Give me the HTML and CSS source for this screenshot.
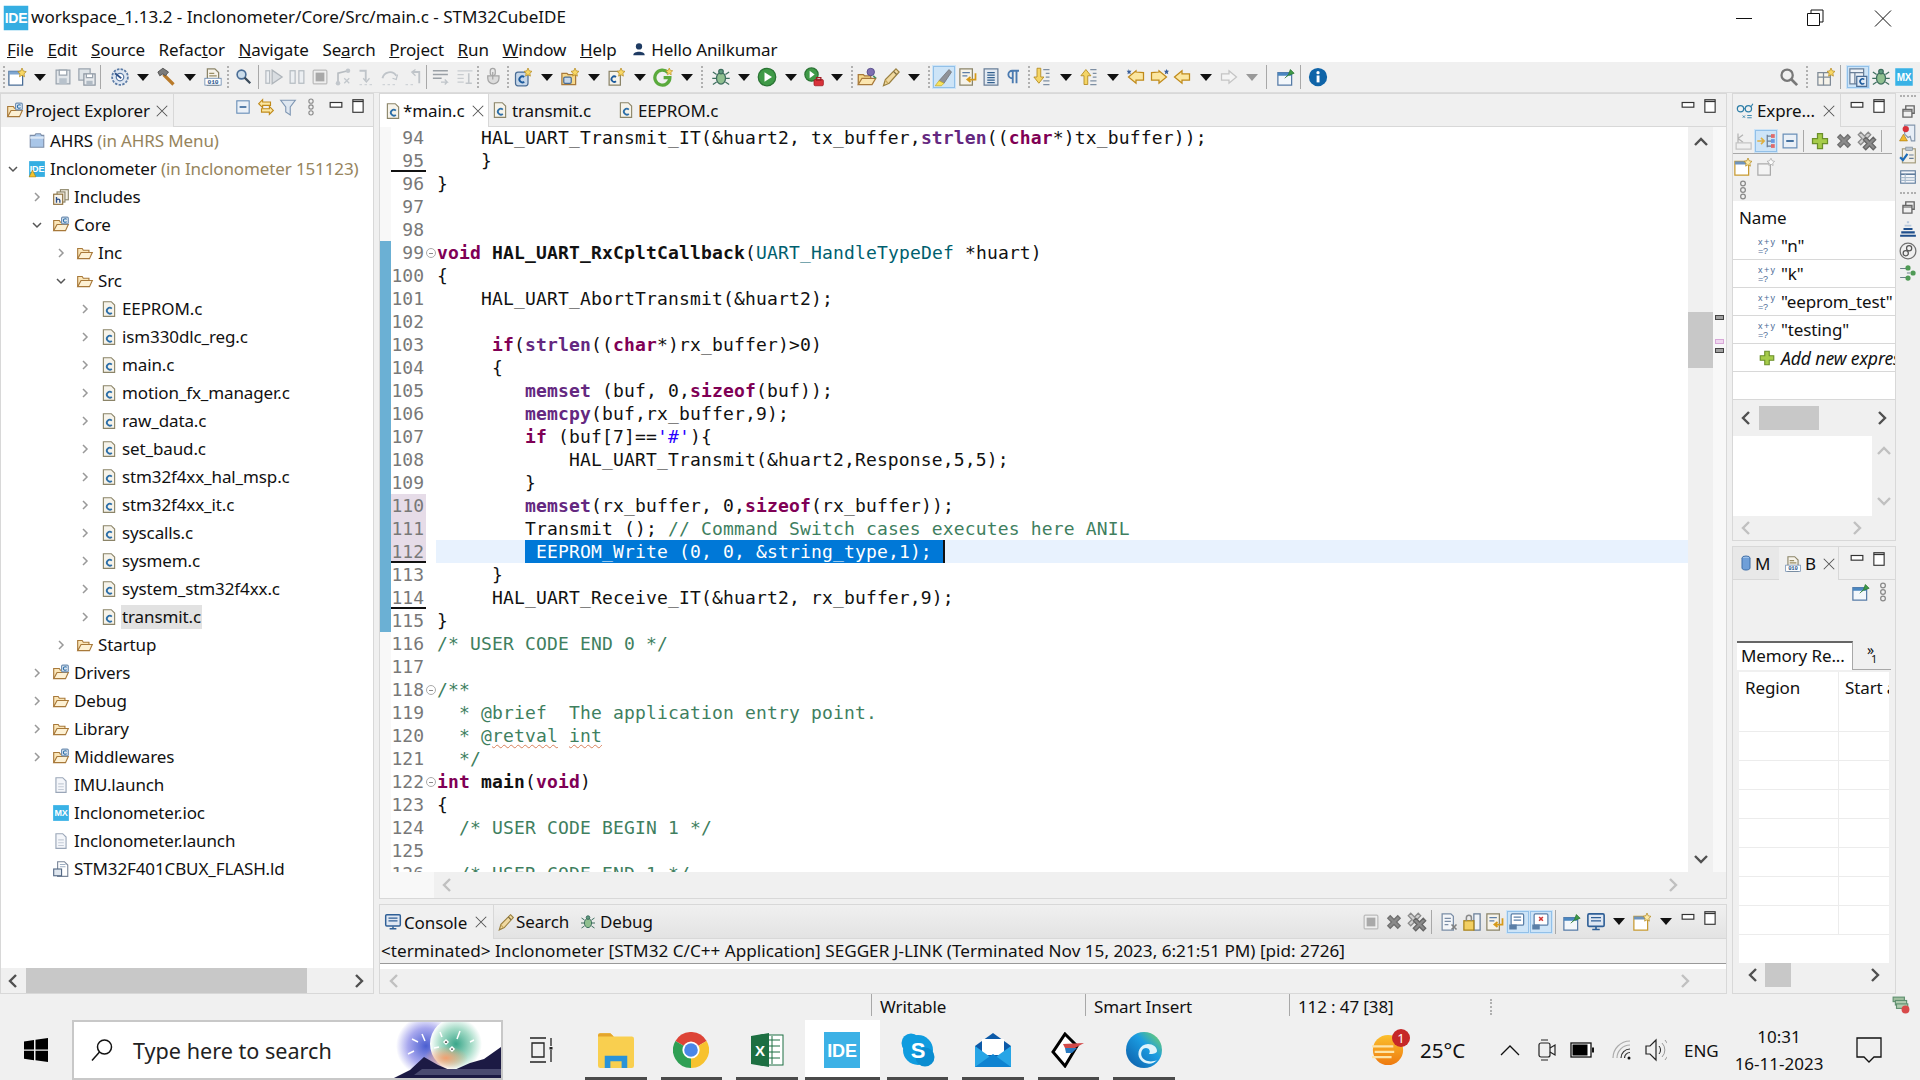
FILE: index.html
```html
<!DOCTYPE html>
<html lang="en">
<head>
    <meta charset="UTF-8">
    <meta name="viewport" content="width=device-width, initial-scale=1.0">
    <title>workspace_1.13.2 - Inclonometer/Core/Src/main.c - STM32CubeIDE</title>
    <link rel="stylesheet" href="styles.css">
</head>
<body>
    <!-- icon sheet -->
    <svg class="sheet" xmlns="http://www.w3.org/2000/svg">
        <symbol id="cfile" viewBox="0 0 16 16"><path d="M3 1.500h7l3 3v10H3z" fill="#f6f3ea" stroke="#8b8468"/><path d="M10.500 7.600a2.600 2.600 0 1 0 0 3.800" fill="none" stroke="#2d6fa8" stroke-width="1.600"/></symbol>
        <symbol id="folder" viewBox="0 0 16 16"><path d="M1.500 13V4h4l1 1.500h5V8" fill="#fbe6b8" stroke="#a8793a"/><path d="M1.500 13l3-5.500h10L12 13z" fill="#fdf1d4" stroke="#a8793a"/></symbol>
        <symbol id="foldc" viewBox="0 0 16 16"><path d="M1.500 13V4h5l1 1.500h4V8" fill="#fbe6b8" stroke="#a8793a"/><path d="M1.500 13l3-5.500h10L12 13z" fill="#fdf1d4" stroke="#a8793a"/><rect x="8.500" y="1" width="6" height="6" rx="1" fill="#dbe6f2" stroke="#6f8fb3"/><path d="M13 3a1.600 1.600 0 1 0 0 2" fill="none" stroke="#2d6fa8"/></symbol>
        <symbol id="incl" viewBox="0 0 16 16"><rect x="7.500" y="1.500" width="7" height="9" fill="#f3efe3" stroke="#8b8468"/><rect x="4.500" y="3.500" width="7" height="9" fill="#f3efe3" stroke="#8b8468"/><rect x="1.500" y="5.500" width="8" height="9" fill="#f8f5ec" stroke="#8b6d3a"/><path d="M4 8v5M4 11c0-1.400 3-1.400 3 0v2" fill="none" stroke="#2d4f88" stroke-width="1.200"/></symbol>
        <symbol id="closedp" viewBox="0 0 16 16"><path d="M2 3h4l1-1.500h4L12 3h2v10.500H2z" fill="#a9c6e8" stroke="#7d8ea8"/><rect x="2" y="4" width="12" height="2" fill="#dbe7f5"/></symbol>
        <symbol id="idep" viewBox="0 0 16 16"><rect x="1" y="1" width="14" height="14" fill="#35aee2"/><text x="8" y="11" font-family="Liberation Sans" font-size="8" font-weight="700" fill="#fff" text-anchor="middle">IDE</text><path d="M1 15l3-6 3 6z" fill="#f4c430" stroke="#a07a10" stroke-width=".5"/></symbol>
        <symbol id="ide" viewBox="0 0 16 16"><rect x="1" y="1" width="14" height="14" fill="#35aee2"/><text x="8" y="11" font-family="Liberation Sans" font-size="8" font-weight="700" fill="#fff" text-anchor="middle">IDE</text></symbol>
        <symbol id="mx" viewBox="0 0 16 16"><rect x="1" y="1" width="14" height="14" fill="#39b2e6"/><text x="8" y="11" font-family="Liberation Sans" font-size="8" font-weight="700" fill="#fff" text-anchor="middle">MX</text></symbol>
        <symbol id="doc" viewBox="0 0 16 16"><path d="M3.500 1.500h6l3 3v10h-9z" fill="#f4f6fa" stroke="#9aa6b8"/><path d="M5.500 7h5M5.500 9.500h5M5.500 12h5" stroke="#c4cbd6"/></symbol>
        <symbol id="ld" viewBox="0 0 16 16"><path d="M5 1.500h6l3 3v10H5z" fill="#fff" stroke="#7a8699"/><rect x="1.500" y="8" width="7" height="6" fill="#dfe6ee" stroke="#566a86"/><path d="M7 4h5M7 6h5" stroke="#9fb0c4"/></symbol>
        <symbol id="newwin" viewBox="0 0 16 16"><rect x="1.500" y="3.500" width="11" height="11" fill="#fff" stroke="#4a6d96"/><rect x="1.500" y="3.500" width="11" height="2.500" fill="#7fa6d0"/><path d="M12 .8l1 2.400 2.400.5-1.800 1.700.4 2.400-2-1.200-2 1.200.4-2.400L8.600 3.700l2.400-.5z" fill="#f7d766" stroke="#b58b20" stroke-width=".6"/></symbol>
        <symbol id="save" viewBox="0 0 16 16"><path d="M2.500 2.500h11v11h-11z" fill="#e2e6ea" stroke="#9aa4ae"/><rect x="5" y="2.500" width="6" height="4" fill="#fff" stroke="#9aa4ae"/><rect x="5" y="9" width="6" height="4.500" fill="#b8c2cc"/></symbol>
        <symbol id="saveall" viewBox="0 0 16 16"><path d="M1.500 1.500h9v9h-9z" fill="#dfe4e8" stroke="#9aa4ae"/><path d="M5.500 5.500h9v9h-9z" fill="#e8ebee" stroke="#8e98a2"/><rect x="7.500" y="5.500" width="5" height="3" fill="#fff" stroke="#9aa4ae"/><rect x="7.500" y="11" width="5" height="3.500" fill="#b0bac4"/></symbol>
        <symbol id="gear" viewBox="0 0 16 16"><circle cx="8" cy="8" r="6.300" fill="#dfe7f2" stroke="#5b7ba6" stroke-width="1.400" stroke-dasharray="2 1"/><circle cx="8" cy="8" r="3" fill="#fff" stroke="#5b7ba6"/><path d="M4 5l5 4" stroke="#2d4f88" stroke-width="1.400"/></symbol>
        <symbol id="hammer" viewBox="0 0 16 16"><path d="M6 6l8 8" stroke="#b97a2a" stroke-width="2.600"/><path d="M1.500 4l4-3 4.500 3-2.500 3-2-1.500-2.500 1.500z" fill="#7b7b7b" stroke="#4c4c4c" stroke-width=".7"/></symbol>
        <symbol id="bin" viewBox="0 0 16 16"><path d="M3.500 1.500h6l3 3v10h-9z" fill="#f6f3ea" stroke="#8b8468"/><path d="M5 5h4M5 7h6" stroke="#9a8f66"/><rect x="1.500" y="9" width="13" height="5.500" fill="#fff" stroke="#5d7fa8" stroke-width=".6"/><text x="8" y="13.500" font-family="Liberation Mono" font-size="5" font-weight="700" fill="#27568c" text-anchor="middle">010</text></symbol>
        <symbol id="tag" viewBox="0 0 16 16"><circle cx="6" cy="6" r="3.500" fill="#cbdcea" stroke="#4a6d96" stroke-width="1.300"/><path d="M8.500 8.500l4.500 4.500" stroke="#3a4a5a" stroke-width="1.800"/></symbol>
        <symbol id="resume" viewBox="0 0 16 16"><rect x="1.500" y="3" width="3" height="10" fill="#eceff2" stroke="#b6bcc2"/><path d="M6.500 2.500l8 5.500-8 5.500z" fill="#d9dde1" stroke="#aeb4ba"/></symbol>
        <symbol id="suspend" viewBox="0 0 16 16"><rect x="2.500" y="3" width="4" height="10" fill="#eceff2" stroke="#b6bcc2"/><rect x="9.500" y="3" width="4" height="10" fill="#eceff2" stroke="#b6bcc2"/></symbol>
        <symbol id="stop" viewBox="0 0 16 16"><rect x="2.500" y="2.500" width="11" height="11" rx="1" fill="#eee" stroke="#bbb"/><rect x="4.500" y="4.500" width="7" height="7" fill="#a9a9a9"/></symbol>
        <symbol id="disc" viewBox="0 0 16 16"><path d="M4 13V5l8-2" fill="none" stroke="#b7bcc1" stroke-width="1.300"/><circle cx="4" cy="13" r="1.800" fill="#c2c7cc"/><circle cx="12" cy="3" r="1.800" fill="#c2c7cc"/><path d="M9 9l4 4M13 9l-4 4" stroke="#c2c7cc"/></symbol>
        <symbol id="step" viewBox="0 0 16 16"><path d="M2 3h5v8" fill="none" stroke="#bfc4c9" stroke-width="1.500"/><path d="M5 9l2.500 3L10 9" fill="none" stroke="#bfc4c9"/><path d="M2 14h2M6 14h2M10 14h2" stroke="#cfd3d7"/></symbol>
        <symbol id="over" viewBox="0 0 16 16"><path d="M2 9a6 6 0 0 1 11-2" fill="none" stroke="#bfc4c9" stroke-width="1.500"/><path d="M10 9l3 1 1-4" fill="none" stroke="#bfc4c9"/><path d="M2 14h2M6 14h2M10 14h2" stroke="#cfd3d7"/></symbol>
        <symbol id="ret" viewBox="0 0 16 16"><path d="M13 13V4H8" fill="none" stroke="#bfc4c9" stroke-width="1.500"/><path d="M10 2L7 4l3 3" fill="none" stroke="#bfc4c9"/><path d="M2 14h2M6 14h2" stroke="#cfd3d7"/></symbol>
        <symbol id="frames" viewBox="0 0 16 16"><path d="M1.500 3h12M1.500 6h12M1.500 9h7" stroke="#9aa0a6" stroke-width="1.200"/><path d="M8 12h5l-2-2M13 12l-2 2" fill="none" stroke="#bfc4c9"/></symbol>
        <symbol id="usestep" viewBox="0 0 16 16"><path d="M2 3h12M2 6h5M2 9h5M2 12h5" stroke="#c8cccf"/><path d="M11 5v8M8.500 13h5" stroke="#c2c6ca" stroke-width="1.300"/></symbol>
        <symbol id="ptr" viewBox="0 0 16 16"><rect x="5" y="1" width="4" height="6" rx="2" fill="#e8e8e8" stroke="#a5a5a5"/><path d="M3 9a4.500 4.500 0 0 0 9 0V7H3z" fill="#dcdcdc" stroke="#a5a5a5"/><path d="M7 4v6" stroke="#a5a5a5"/></symbol>
        <symbol id="newc" viewBox="0 0 16 16"><rect x="2" y="4" width="10" height="11" rx="2" fill="#c6d7ea" stroke="#4a6d96"/><path d="M9 8a2.400 2.400 0 1 0 0 3.800" fill="none" stroke="#1c5a9c" stroke-width="1.500"/><path d="M12 .8l.9 2.200 2.300.5-1.700 1.500.4 2.300-1.900-1.100-1.900 1.100.4-2.300L8.800 3.500l2.300-.5z" fill="#f7d766" stroke="#b58b20" stroke-width=".6"/></symbol>
        <symbol id="newfold" viewBox="0 0 16 16"><path d="M1.500 14V5h4l1 1h6v8z" fill="#f6d98c" stroke="#a8793a"/><rect x="3" y="8" width="6" height="5" rx="1" fill="#c6d7ea" stroke="#4a6d96"/><path d="M12 .8l.9 2.200 2.300.5-1.700 1.500.4 2.300-1.900-1.100-1.900 1.100.4-2.300L8.800 3.500l2.300-.5z" fill="#f7d766" stroke="#b58b20" stroke-width=".6"/></symbol>
        <symbol id="newf" viewBox="0 0 16 16"><path d="M2.500 3.500h7l2 2v9h-9z" fill="#f6f3ea" stroke="#8b8468"/><path d="M8 8a2.200 2.200 0 1 0 0 3.400" fill="none" stroke="#1c5a9c" stroke-width="1.400"/><path d="M12 .8l.9 2.200 2.300.5-1.700 1.500.4 2.300-1.900-1.100-1.900 1.100.4-2.300L8.800 3.500l2.300-.5z" fill="#f7d766" stroke="#b58b20" stroke-width=".6"/></symbol>
        <symbol id="greeng" viewBox="0 0 16 16"><path d="M12 4.500a6 6 0 1 0 1.500 4H8.500" fill="none" stroke="#5aaa3c" stroke-width="2.600"/><path d="M13 .8l.8 1.800 2 .4-1.500 1.300.3 2-1.600-1-1.600 1 .3-2L10.200 3l2-.4z" fill="#f7d766" stroke="#b58b20" stroke-width=".5"/></symbol>
        <symbol id="bug" viewBox="0 0 16 16"><ellipse cx="8" cy="9" rx="3.600" ry="4.600" fill="#8fbf8f" stroke="#3f6f5f"/><circle cx="8" cy="3.600" r="1.800" fill="#5e9a7e" stroke="#3f6f5f"/><path d="M4.500 6L1.500 4M4.300 9H1M4.500 12l-3 2M11.500 6l3-2M11.700 9H15M11.500 12l3 2" stroke="#3f6f5f"/></symbol>
        <symbol id="run" viewBox="0 0 16 16"><circle cx="8" cy="8" r="7" fill="#3f9a47" stroke="#2a7434"/><path d="M6 4.200l6 3.800-6 3.800z" fill="#fff"/></symbol>
        <symbol id="extrun" viewBox="0 0 16 16"><circle cx="6" cy="6" r="5.300" fill="#3f9a47" stroke="#2a7434"/><path d="M4.500 3l4 3-4 3z" fill="#fff"/><rect x="8" y="10" width="7.500" height="5" rx="1" fill="#d8323a" stroke="#9e1b22" stroke-width=".6"/><rect x="10" y="8.500" width="3.500" height="2" fill="none" stroke="#9e1b22"/></symbol>
        <symbol id="openf" viewBox="0 0 16 16"><path d="M1 14V6h4l1 1h5v2" fill="#f6d98c" stroke="#a8793a"/><path d="M1 14l3-5h11l-3 5z" fill="#fbe6b0" stroke="#a8793a"/><circle cx="11" cy="4" r="3" fill="#7d6fb0" stroke="#4a3f80" stroke-width=".6"/><path d="M13 7l2 2" stroke="#3f8f5f" stroke-width="1.400"/></symbol>
        <symbol id="pen" viewBox="0 0 16 16"><path d="M12 1.500l2.500 2.500-8 9-4.500 2 1.500-5z" fill="#f0d9a0" stroke="#9a8040"/><path d="M10 3.500l2.500 2.500" stroke="#7a6a40"/><path d="M3.500 10.500l2 2.500" stroke="#c9a85a"/></symbol>
        <symbol id="mark" viewBox="0 0 16 16"><path d="M4 11l8-9 2 2-6 9z" fill="#8f9298" stroke="#6f7278" stroke-width=".6"/><path d="M1 15l3-4 4 2-2 2z" fill="#f6e260" stroke="#c7ad2a" stroke-width=".6"/></symbol>
        <symbol id="wrap" viewBox="0 0 16 16"><rect x="1.500" y="1.500" width="10" height="13" fill="#f6f3ea" stroke="#8b8468"/><path d="M3.500 4.500h6M3.500 7h4" stroke="#5f7fa8"/><path d="M14 5v5H8M10 8l-2.500 2 2.500 2" fill="none" stroke="#d69a1a" stroke-width="1.400"/></symbol>
        <symbol id="block" viewBox="0 0 16 16"><rect x="2.500" y="1.500" width="11" height="13" fill="#e3eaf2" stroke="#6a7f98"/><path d="M5 4.500h6M5 6.500h6M5 8.500h6M5 10.500h6M5 12.500h6" stroke="#33608f" stroke-width=".9"/></symbol>
        <symbol id="pil" viewBox="0 0 16 16"><path d="M7 13V3h-.5a3 3 0 0 0 0 6H7M7 3h5M10 3v10" fill="none" stroke="#4a7ab0" stroke-width="1.500"/></symbol>
        <symbol id="nextann" viewBox="0 0 16 16"><path d="M9 2h5M11 5h3M11 8h3M9 11h5M9 14h5" stroke="#7e8fa3"/><path d="M4 1h3v7h2.500L5.500 13 1.500 8H4z" fill="#f4d566" stroke="#b58b20" stroke-width=".7"/></symbol>
        <symbol id="prevann" viewBox="0 0 16 16"><path d="M9 2h5M11 5h3M11 8h3M9 11h5M9 14h5" stroke="#7e8fa3"/><path d="M4 14h3V7h2.500L5.500 2 1.500 7H4z" fill="#f4d566" stroke="#b58b20" stroke-width=".7"/></symbol>
        <symbol id="backs" viewBox="0 0 16 16"><path d="M8 4v-1L2 8l6 5v-2.500h6v-6z" fill="#fbe6a0" stroke="#c08a1a"/><path d="M2 1.500l.8 1.400 1.600.1-1 1.200.4 1.500L2.500 5l-1.300.7.300-1.500-1-1.200 1.500-.1z" fill="#3a5f9a"/></symbol>
        <symbol id="fwds" viewBox="0 0 16 16"><path d="M8 4v-1l6 5-6 5v-2.500H2v-6z" fill="#fbe6a0" stroke="#c08a1a"/><path d="M14 1.500l.8 1.400 1.200.1-1 1.200.4 1.500-1.400-.7-1.300.7.300-1.500-1-1.200 1.500-.1z" fill="#3a5f9a"/></symbol>
        <symbol id="back" viewBox="0 0 16 16"><path d="M8 3L2 8l6 5v-2.500h6v-5H8z" fill="#fbe6a0" stroke="#c08a1a"/></symbol>
        <symbol id="fwd" viewBox="0 0 16 16"><path d="M8 3l6 5-6 5v-2.500H2v-5h6z" fill="#f4f4f4" stroke="#c4c4c4"/></symbol>
        <symbol id="pinw" viewBox="0 0 16 16"><rect x="1.500" y="4.500" width="11" height="10" fill="#f3f7fb" stroke="#567ba6"/><rect x="1.500" y="4.500" width="11" height="2.500" fill="#4a86c0"/><path d="M7 9l3-3 1.500-4 3 3-4 1.500" fill="#3f9a47" stroke="#2a7434" stroke-width=".6"/></symbol>
        <symbol id="info" viewBox="0 0 16 16"><circle cx="8" cy="8" r="7.300" fill="#0f64a8"/><rect x="6.900" y="6.800" width="2.300" height="5.500" fill="#fff"/><circle cx="8" cy="4.500" r="1.300" fill="#fff"/></symbol>
        <symbol id="mag" viewBox="0 0 16 16"><circle cx="6.500" cy="6.500" r="4.500" fill="none" stroke="#787878" stroke-width="1.800"/><path d="M10 10l4.500 4.500" stroke="#787878" stroke-width="2.200"/></symbol>
        <symbol id="persp" viewBox="0 0 16 16"><rect x="1.500" y="4.500" width="10" height="10" fill="#f6f3ea" stroke="#7f8a96"/><path d="M1.500 8h10M6 4.500v10" stroke="#7f8a96"/><path d="M12 .8l.9 2.200 2.300.5-1.700 1.500.4 2.300-1.900-1.100-1.900 1.100.4-2.300L8.800 3.500l2.300-.5z" fill="#f7d766" stroke="#b58b20" stroke-width=".6"/></symbol>
        <symbol id="perspc" viewBox="0 0 16 16"><rect x="1.500" y="1.500" width="11" height="12" fill="#eef2f7" stroke="#6a7f98"/><path d="M1.500 4.500h11M5.500 4.500v9" stroke="#6a7f98"/><rect x="7" y="7.500" width="8" height="8" fill="#e0eaf5" stroke="#4a6d96"/><path d="M13 10a2 2 0 1 0 0 3" fill="none" stroke="#1c5a9c" stroke-width="1.300"/></symbol>
        <symbol id="collapse" viewBox="0 0 16 16"><rect x="2.500" y="2.500" width="11" height="11" fill="#eaf0f7" stroke="#6a8fb8"/><path d="M5 8h6" stroke="#2d5f94" stroke-width="1.400"/></symbol>
        <symbol id="link" viewBox="0 0 16 16"><path d="M5 1.500L1.500 5 5 8.500V6.500h7v-3H5z" fill="#fbe6a0" stroke="#c08a1a"/><path d="M11 7.500l3.500 3.500L11 14.500v-2H4v-3h7z" fill="#fbe6a0" stroke="#c08a1a"/></symbol>
        <symbol id="filter" viewBox="0 0 16 16"><path d="M1.500 2h13L10 8v7l-4-2.500V8z" fill="#dfe7f0" stroke="#7f97b3"/></symbol>
        <symbol id="kebab" viewBox="0 0 16 16"><circle cx="8" cy="2.800" r="1.900" fill="none" stroke="#8a8a8a"/><circle cx="8" cy="8" r="1.900" fill="none" stroke="#8a8a8a"/><circle cx="8" cy="13.200" r="1.900" fill="none" stroke="#8a8a8a"/></symbol>
        <symbol id="close" viewBox="0 0 12 12"><path d="M1.500 1.500l9 9M10.500 1.500l-9 9" stroke="#555" stroke-width=".9"/></symbol>
        <symbol id="minv" viewBox="0 0 12 12"><rect x="1" y="3" width="10" height="4" fill="#fff" stroke="#333"/></symbol>
        <symbol id="maxv" viewBox="0 0 12 14"><rect x="1.500" y="1.500" width="9" height="11" fill="#fff" stroke="#333"/><path d="M1.500 3h9" stroke="#333" stroke-width="1.200"/></symbol>
        <symbol id="chevr" viewBox="0 0 12 12"><path d="M4 2l4 4-4 4" fill="none" stroke="#999" stroke-width="1.500"/></symbol>
        <symbol id="chevd" viewBox="0 0 12 12"><path d="M2 4l4 4 4-4" fill="none" stroke="#555" stroke-width="1.500"/></symbol>
        <symbol id="sl" viewBox="0 0 12 16"><path d="M9 2L3 8l6 6" fill="none" stroke="#505050" stroke-width="2.400"/></symbol>
        <symbol id="sr" viewBox="0 0 12 16"><path d="M3 2l6 6-6 6" fill="none" stroke="#505050" stroke-width="2.400"/></symbol>
        <symbol id="sld" viewBox="0 0 12 16"><path d="M9 2L3 8l6 6" fill="none" stroke="#c0c0c0" stroke-width="2.400"/></symbol>
        <symbol id="srd" viewBox="0 0 12 16"><path d="M3 2l6 6-6 6" fill="none" stroke="#c0c0c0" stroke-width="2.400"/></symbol>
        <symbol id="su" viewBox="0 0 16 12"><path d="M2 9l6-6 6 6" fill="none" stroke="#505050" stroke-width="2.400"/></symbol>
        <symbol id="sd" viewBox="0 0 16 12"><path d="M2 3l6 6 6-6" fill="none" stroke="#505050" stroke-width="2.400"/></symbol>
        <symbol id="sud" viewBox="0 0 16 12"><path d="M2 9l6-6 6 6" fill="none" stroke="#c0c0c0" stroke-width="2.400"/></symbol>
        <symbol id="sdd" viewBox="0 0 16 12"><path d="M2 3l6 6 6-6" fill="none" stroke="#c0c0c0" stroke-width="2.400"/></symbol>
        <symbol id="expr" viewBox="0 0 16 16"><text x="0" y="7" font-family="Liberation Sans" font-size="8" fill="#4d6c97" textLength="15">x+y</text><text x="0" y="15" font-family="Liberation Sans" font-size="8" fill="#4d6c97">=?</text></symbol>
        <symbol id="glasses" viewBox="0 0 16 16"><circle cx="4" cy="6" r="2.800" fill="none" stroke="#2f7fa8" stroke-width="1.100"/><circle cx="11" cy="6" r="2.800" fill="none" stroke="#2f7fa8" stroke-width="1.100"/><path d="M6.800 6h1.400M13.500 4l1.500-2.500" stroke="#2f7fa8"/><path d="M6 12l2 2M8 12l-2 2M10 12h4M10 14h4" stroke="#2f7fa8" stroke-width=".8"/></symbol>
        <symbol id="plus" viewBox="0 0 16 16"><path d="M6 2h4v4h4v4h-4v4H6v-4H2V6h4z" fill="#a6cc4a" stroke="#6b8f2a"/></symbol>
        <symbol id="xg" viewBox="0 0 16 16"><path d="M3 5l2-2 3 3 3-3 2 2-3 3 3 3-2 2-3-3-3 3-2-2 3-3z" fill="#8a8a8a" stroke="#707070"/></symbol>
        <symbol id="xxg" viewBox="0 0 16 16"><path d="M1 3l2-2 3 3 3-3 2 2-3 3 3 3-2 2-3-3-3 3-2-2 3-3z" fill="#d0d0d0" stroke="#8a8a8a"/><path d="M5 7l2-2 3 3 3-3 2 2-3 3 3 3-2 2-3-3-3 3-2-2 3-3z" fill="#8a8a8a" stroke="#666"/></symbol>
        <symbol id="typesh" viewBox="0 0 16 16"><path d="M4 2v8M4 6l4-3M4 6l4 3" stroke="#b4b4b4"/><rect x="2.500" y="9.500" width="12" height="5" fill="#f0f0f0" stroke="#c4c4c4"/></symbol>
        <symbol id="logical" viewBox="0 0 16 16"><path d="M1 8h5M4 5.500L6.500 8 4 10.500" fill="none" stroke="#e0b040" stroke-width="1.300"/><path d="M9 3v10M9 4h3M9 8h3M9 12h3" stroke="#6a7f98"/><rect x="12" y="2.500" width="3" height="3" fill="#e06a6a"/><rect x="12" y="6.500" width="3" height="3" fill="#6a9ae0"/><rect x="12" y="10.500" width="3" height="3" fill="#e06a6a"/></symbol>
        <symbol id="newgray" viewBox="0 0 16 16"><rect x="1.500" y="5.500" width="10" height="9" fill="#f4f4f4" stroke="#aaa"/><path d="M12 1l.9 2 2 .5-1.500 1.300.3 2-1.700-1-1.700 1 .3-2L8.800 3.500l2-.5z" fill="#fafafa" stroke="#aaa" stroke-width=".6"/></symbol>
        <symbol id="newy" viewBox="0 0 16 16"><rect x="1.500" y="3.500" width="11" height="11" fill="#fff" stroke="#c89a30"/><rect x="1.500" y="3.500" width="11" height="2.500" fill="#6f94bd"/><path d="M12 .8l.9 2.200 2.300.5-1.700 1.500.4 2.300-1.900-1.100-1.900 1.100.4-2.300L8.800 3.500l2.300-.5z" fill="#fbe9a8" stroke="#b58b20" stroke-width=".6"/></symbol>
        <symbol id="db" viewBox="0 0 10 16"><ellipse cx="5" cy="3" rx="4" ry="2" fill="#9cc0e8" stroke="#3f6fa8"/><path d="M1 3v10c0 2.700 8 2.700 8 0V3" fill="#6f9fd8" stroke="#3f6fa8"/></symbol>
        <symbol id="consoleic" viewBox="0 0 16 16"><rect x="1.500" y="1.500" width="13" height="10" rx="1" fill="#dfe7f2" stroke="#2f5f96" stroke-width="1.300"/><path d="M4 4.500h8M4 7h8" stroke="#2f5f96"/><path d="M5 14h6M8 12v2" stroke="#2f5f96" stroke-width="1.300"/></symbol>
        <symbol id="clr" viewBox="0 0 16 16"><path d="M2.500 1.500h7l2 2v11h-9z" fill="#f4f6f9" stroke="#7a8da6"/><path d="M4.500 5h5M4.500 7.500h5M4.500 10h3" stroke="#7a8da6"/><path d="M10 10l4 4M14 10l-4 4" stroke="#808080" stroke-width="1.300"/></symbol>
        <symbol id="lock" viewBox="0 0 16 16"><rect x="9.500" y="1.500" width="5" height="13" fill="#eef2f7" stroke="#6a7f98"/><rect x="1.500" y="7" width="8" height="7.500" fill="#f2cf62" stroke="#a8821a"/><path d="M3.500 7V4.500a2 2 0 0 1 4 0V7" fill="none" stroke="#8a8a8a" stroke-width="1.200"/></symbol>
        <symbol id="pinc" viewBox="0 0 16 16"><rect x="2.500" y="1.500" width="10" height="9" rx="1" fill="#fff" stroke="#5a7fa8"/><path d="M4.500 4h6M4.500 6.500h6" stroke="#5a7fa8"/><rect x="1" y="10" width="6" height="4" fill="#5a7fa8"/></symbol>
        <symbol id="pincx" viewBox="0 0 16 16"><rect x="2.500" y="1.500" width="11" height="9" rx="1" fill="#fff" stroke="#5a7fa8"/><path d="M6.500 4l3 3M9.500 4l-3 3" stroke="#d03838" stroke-width="1.300"/><rect x="1" y="10" width="6" height="4" fill="#5a7fa8"/></symbol>
        <symbol id="trestore" viewBox="0 0 16 16"><path d="M3.500 6.500h8v7h-8zM6 6.500V3.500h7.500v6.500h-2" fill="#f0f0f0" stroke="#666" stroke-width="1.200"/><path d="M3.500 8h8" stroke="#666"/></symbol>
        <symbol id="tbreak" viewBox="0 0 16 16"><path d="M5 1h9v14h-3l-1-4-2 1-3-3z" fill="#e8eef6" stroke="#8496ac"/><circle cx="6" cy="4.500" r="2.800" fill="#d8323a"/><path d="M4 9l3.500 6H.5z" fill="#f2b92e" stroke="#a87a10" stroke-width=".6"/></symbol>
        <symbol id="ttask" viewBox="0 0 16 16"><rect x="3" y="2.500" width="11.500" height="12.500" fill="#f2efe6" stroke="#a09878"/><rect x="6" y="1" width="6" height="3" fill="#b8c4d0" stroke="#7f8c9a" stroke-width=".6"/><path d="M1 10l2.500 2.500L7.500 7" fill="none" stroke="#1c6bb8" stroke-width="2"/><path d="M9 8h4M9 11h4" stroke="#6a7f98"/></symbol>
        <symbol id="ttable" viewBox="0 0 16 16"><rect x="1.500" y="2.500" width="13" height="11" fill="#f4f6fa" stroke="#5f7c9c"/><path d="M1.500 5.500h13" stroke="#5f7c9c" stroke-width="1.400"/><path d="M1.500 8.500h13M1.500 11h13M5.500 5.500v8" stroke="#a8bacc"/></symbol>
        <symbol id="tstack" viewBox="0 0 16 16"><path d="M7 2h2M5 5h6M7 5" stroke="#b8c8dc" stroke-width="1.600"/><path d="M4 8h8M2 11h12M1 14h14" stroke="#1f4f8c" stroke-width="1.800"/></symbol>
        <symbol id="tcircle" viewBox="0 0 16 16"><circle cx="8" cy="8" r="7" fill="#f0f0f0" stroke="#707070" stroke-width="1.100"/><circle cx="9" cy="5.500" r="2.300" fill="none" stroke="#555" stroke-width="1.100"/><circle cx="6" cy="10" r="2.300" fill="none" stroke="#555" stroke-width="1.100"/></symbol>
        <symbol id="ttree" viewBox="0 0 16 16"><path d="M1 4h6M1 12h6M7 8h3" stroke="#6a7f88"/><circle cx="8" cy="3.500" r="2.300" fill="#4f9a55"/><circle cx="12.500" cy="8" r="2.300" fill="#4f9a55"/><circle cx="8" cy="12.500" r="2.300" fill="#4f9a55"/></symbol>
    </svg>

    <header class="titlebar">
        <svg class="app-ic"><use href="#ide"/></svg>
        <span class="title">workspace_1.13.2 - Inclonometer/Core/Src/main.c - STM32CubeIDE</span>
        <div class="winctl">
            <svg viewBox="0 0 70 32"><path d="M28 16.500h16" stroke="#111"/></svg>
            <svg viewBox="0 0 70 32"><path d="M29.500 11.500h12v12h-12zM33 11.500V8h12v12h-3.500" fill="none" stroke="#111"/></svg>
            <svg viewBox="0 0 70 32"><path d="M27 8.500l16 16M43 8.500l-16 16" stroke="#111"/></svg>
        </div>
    </header>

    <nav class="menubar">
        <span><u>F</u>ile</span><span><u>E</u>dit</span><span><u>S</u>ource</span><span>Refac<u>t</u>or</span><span><u>N</u>avigate</span><span>Se<u>a</u>rch</span><span><u>P</u>roject</span><span><u>R</u>un</span><span><u>W</u>indow</span><span><u>H</u>elp</span>
        <span class="hello"><svg class="user" viewBox="0 0 16 16"><circle cx="8" cy="5" r="3.600" fill="#1f3b63"/><path d="M1.500 15c0-5 13-5 13 0z" fill="#1f3b63"/></svg>Hello Anilkumar</span>
    </nav>

    <div class="toolbar">
        <i class="grip g3"></i>
        <svg class="ic"><use href="#newwin"/></svg><i class="drop"></i>
        <svg class="ic"><use href="#save"/></svg><svg class="ic"><use href="#saveall"/></svg>
        <i class="sep s8"></i>
        <svg class="ic"><use href="#gear"/></svg><i class="drop"></i>
        <svg class="ic"><use href="#hammer"/></svg><i class="drop"></i>
        <svg class="ic"><use href="#bin"/></svg>
        <i class="grip g6"></i>
        <svg class="ic"><use href="#tag"/></svg>
        <i class="sep s3"></i>
        <svg class="ic"><use href="#resume"/></svg><svg class="ic"><use href="#suspend"/></svg><svg class="ic"><use href="#stop"/></svg><svg class="ic"><use href="#disc"/></svg><svg class="ic"><use href="#step"/></svg><svg class="ic"><use href="#over"/></svg><svg class="ic"><use href="#ret"/></svg>
        <i class="sep s4"></i>
        <svg class="ic"><use href="#frames"/></svg><svg class="ic"><use href="#usestep"/></svg>
        <i class="grip g4"></i>
        <svg class="ic"><use href="#ptr"/></svg>
        <i class="grip g4"></i>
        <svg class="ic"><use href="#newc"/></svg><i class="drop"></i>
        <svg class="ic"><use href="#newfold"/></svg><i class="drop"></i>
        <svg class="ic"><use href="#newf"/></svg><i class="drop"></i>
        <svg class="ic"><use href="#greeng"/></svg><i class="drop"></i>
        <i class="grip g8"></i>
        <svg class="ic"><use href="#bug"/></svg><i class="drop"></i>
        <svg class="ic"><use href="#run"/></svg><i class="drop"></i>
        <svg class="ic"><use href="#extrun"/></svg><i class="drop"></i>
        <i class="grip g5"></i>
        <svg class="ic"><use href="#openf"/></svg>
        <svg class="ic"><use href="#pen"/></svg><i class="drop"></i>
        <i class="grip g5"></i>
        <svg class="ic on"><use href="#mark"/></svg>
        <svg class="ic"><use href="#wrap"/></svg><svg class="ic"><use href="#block"/></svg><svg class="ic"><use href="#pil"/></svg>
        <i class="grip g2"></i>
        <svg class="ic"><use href="#nextann"/></svg><i class="drop"></i>
        <svg class="ic"><use href="#prevann"/></svg><i class="drop"></i>
        <svg class="ic"><use href="#backs"/></svg><svg class="ic"><use href="#fwds"/></svg>
        <svg class="ic"><use href="#back"/></svg><i class="drop"></i>
        <svg class="ic"><use href="#fwd"/></svg><i class="drop dim"></i>
        <i class="sep s5"></i>
        <svg class="ic"><use href="#pinw"/></svg>
        <i class="sep s6"></i>
        <svg class="ic"><use href="#info"/></svg>
        <div class="tool-right">
            <svg class="ic"><use href="#mag"/></svg>
            <i class="grip g15"></i>
            <svg class="ic"><use href="#persp"/></svg>
            <i class="sep s10"></i>
            <svg class="ic on"><use href="#perspc"/></svg><svg class="ic"><use href="#bug"/></svg><svg class="ic"><use href="#mx"/></svg>
        </div>
    </div>

    <main class="workbench">
        <section class="panel explorer">
            <div class="tabstrip">
                <div class="tab active tab-pe"><svg class="tic"><use href="#foldc"/></svg><span>Project Explorer</span><svg class="x"><use href="#close"/></svg></div>
                <div class="strip-tools pe-tools">
                    <svg class="ic"><use href="#collapse"/></svg><svg class="ic"><use href="#link"/></svg><svg class="ic"><use href="#filter"/></svg><svg class="ic"><use href="#kebab"/></svg>
                    <svg class="mm"><use href="#minv"/></svg><svg class="mm"><use href="#maxv"/></svg>
                </div>
            </div>
            <div class="tree">
                <div class="row l0"><i class="chev"></i><svg class="tic"><use href="#closedp"/></svg><span>AHRS <em>(in AHRS Menu)</em></span></div>
                <div class="row l0"><svg class="chev"><use href="#chevd"/></svg><svg class="tic"><use href="#idep"/></svg><span>Inclonometer <em>(in Inclonometer 151123)</em></span></div>
                <div class="row l1"><svg class="chev"><use href="#chevr"/></svg><svg class="tic"><use href="#incl"/></svg><span>Includes</span></div>
                <div class="row l1"><svg class="chev"><use href="#chevd"/></svg><svg class="tic"><use href="#foldc"/></svg><span>Core</span></div>
                <div class="row l2"><svg class="chev"><use href="#chevr"/></svg><svg class="tic"><use href="#folder"/></svg><span>Inc</span></div>
                <div class="row l2"><svg class="chev"><use href="#chevd"/></svg><svg class="tic"><use href="#folder"/></svg><span>Src</span></div>
                <div class="row l3"><svg class="chev"><use href="#chevr"/></svg><svg class="tic"><use href="#cfile"/></svg><span>EEPROM.c</span></div>
                <div class="row l3"><svg class="chev"><use href="#chevr"/></svg><svg class="tic"><use href="#cfile"/></svg><span>ism330dlc_reg.c</span></div>
                <div class="row l3"><svg class="chev"><use href="#chevr"/></svg><svg class="tic"><use href="#cfile"/></svg><span>main.c</span></div>
                <div class="row l3"><svg class="chev"><use href="#chevr"/></svg><svg class="tic"><use href="#cfile"/></svg><span>motion_fx_manager.c</span></div>
                <div class="row l3"><svg class="chev"><use href="#chevr"/></svg><svg class="tic"><use href="#cfile"/></svg><span>raw_data.c</span></div>
                <div class="row l3"><svg class="chev"><use href="#chevr"/></svg><svg class="tic"><use href="#cfile"/></svg><span>set_baud.c</span></div>
                <div class="row l3"><svg class="chev"><use href="#chevr"/></svg><svg class="tic"><use href="#cfile"/></svg><span>stm32f4xx_hal_msp.c</span></div>
                <div class="row l3"><svg class="chev"><use href="#chevr"/></svg><svg class="tic"><use href="#cfile"/></svg><span>stm32f4xx_it.c</span></div>
                <div class="row l3"><svg class="chev"><use href="#chevr"/></svg><svg class="tic"><use href="#cfile"/></svg><span>syscalls.c</span></div>
                <div class="row l3"><svg class="chev"><use href="#chevr"/></svg><svg class="tic"><use href="#cfile"/></svg><span>sysmem.c</span></div>
                <div class="row l3"><svg class="chev"><use href="#chevr"/></svg><svg class="tic"><use href="#cfile"/></svg><span>system_stm32f4xx.c</span></div>
                <div class="row l3 picked"><svg class="chev"><use href="#chevr"/></svg><svg class="tic"><use href="#cfile"/></svg><span>transmit.c</span></div>
                <div class="row l2"><svg class="chev"><use href="#chevr"/></svg><svg class="tic"><use href="#folder"/></svg><span>Startup</span></div>
                <div class="row l1"><svg class="chev"><use href="#chevr"/></svg><svg class="tic"><use href="#foldc"/></svg><span>Drivers</span></div>
                <div class="row l1"><svg class="chev"><use href="#chevr"/></svg><svg class="tic"><use href="#folder"/></svg><span>Debug</span></div>
                <div class="row l1"><svg class="chev"><use href="#chevr"/></svg><svg class="tic"><use href="#folder"/></svg><span>Library</span></div>
                <div class="row l1"><svg class="chev"><use href="#chevr"/></svg><svg class="tic"><use href="#foldc"/></svg><span>Middlewares</span></div>
                <div class="row l1"><i class="chev"></i><svg class="tic"><use href="#doc"/></svg><span>IMU.launch</span></div>
                <div class="row l1"><i class="chev"></i><svg class="tic"><use href="#mx"/></svg><span>Inclonometer.ioc</span></div>
                <div class="row l1"><i class="chev"></i><svg class="tic"><use href="#doc"/></svg><span>Inclonometer.launch</span></div>
                <div class="row l1"><i class="chev"></i><svg class="tic"><use href="#ld"/></svg><span>STM32F401CBUX_FLASH.ld</span></div>
            </div>
            <div class="hbar hbar-pe">
                <svg class="sa"><use href="#sl"/></svg><i class="thumb"></i><svg class="sa end"><use href="#sr"/></svg>
            </div>
        </section>

        <div class="center">
            <section class="panel editor">
                <div class="tabstrip">
                    <div class="tab white tab-main"><svg class="tic"><use href="#cfile"/></svg><span>*main.c</span><svg class="x"><use href="#close"/></svg></div>
                    <div class="tab tab-tr"><svg class="tic"><use href="#cfile"/></svg><span>transmit.c</span></div>
                    <div class="tab tab-ee"><svg class="tic"><use href="#cfile"/></svg><span>EEPROM.c</span></div>
                    <div class="strip-tools"><svg class="mm"><use href="#minv"/></svg><svg class="mm"><use href="#maxv"/></svg></div>
                </div>
                <div class="edit-body">
                    <div class="changebar"></div>
                    <div class="numbers">
                        <div>94</div><div class="ul">95</div><div>96</div><div>97</div><div>98</div><div class="fold">99</div><div>100</div><div>101</div><div>102</div><div>103</div><div>104</div><div>105</div><div>106</div><div>107</div><div>108</div><div>109</div>
                        <div class="chg">110</div><div class="chg">111</div><div class="chg ul">112</div><div>113</div><div class="ul">114</div><div>115</div><div>116</div><div>117</div><div class="fold">118</div><div>119</div><div>120</div><div>121</div><div class="fold">122</div><div>123</div><div>124</div><div>125</div><div>126</div>
                    </div>
                    <pre class="code"><div>    HAL_UART_Transmit_IT(&amp;huart2, tx_buffer,<b class="fn">strlen</b>((<b class="kw">char</b><span class="op">*</span>)tx_buffer));</div><div>    }</div><div>}</div><div> </div><div> </div><div><b class="kw">void</b> <b>HAL_UART_RxCpltCallback</b>(<span class="ty">UART_HandleTypeDef</span> *huart)</div><div>{</div><div>    HAL_UART_AbortTransmit(&amp;huart2);</div><div> </div><div>     <b class="kw">if</b>(<b class="fn">strlen</b>((<b class="kw">char</b>*)rx_buffer)&gt;0)</div><div>     {</div><div>        <b class="fn">memset</b> (buf, 0,<b class="kw">sizeof</b>(buf));</div><div>        <b class="fn">memcpy</b>(buf,rx_buffer,9);</div><div>        <b class="kw">if</b> (buf[7]==<span class="str">'#'</span>){</div><div>            HAL_UART_Transmit(&amp;huart2,Response,5,5);</div><div>        }</div><div>        <b class="fn">memset</b>(rx_buffer, 0,<b class="kw">sizeof</b>(rx_buffer));</div><div>        Transmit (); <span class="cm">// Command Switch cases executes here ANIL</span></div><div class="cur">        <span class="sel"> EEPROM_Write (0, 0, &amp;string_type,1); </span><i class="caret"></i></div><div>     }</div><div>     HAL_UART_Receive_IT(&amp;huart2, rx_buffer,9);</div><div>}</div><div class="cm">/* USER CODE END 0 */</div><div> </div><div class="cm">/**</div><div class="cm">  * @brief  The application entry point.</div><div class="cm">  * @<span class="squig">retval</span> <span class="squig">int</span></div><div class="cm">  */</div><div><b class="kw">int</b> <b>main</b>(<b class="kw">void</b>)</div><div>{</div><div class="cm">  /* USER CODE BEGIN 1 */</div><div> </div><div class="cm">  /* USER CODE END 1 */</div></pre>
                    <div class="vbar vbar-ed">
                        <svg class="sv"><use href="#su"/></svg><i class="vthumb"></i><svg class="sv end"><use href="#sd"/></svg>
                    </div>
                    <div class="overview">
                        <i class="ov-mark m1"></i><i class="ov-mark pink"></i><i class="ov-mark m3"></i>
                    </div>
                </div>
                <div class="hbar hbar-ed">
                    <svg class="sa"><use href="#sld"/></svg><svg class="sa end"><use href="#srd"/></svg>
                </div>
            </section>

            <section class="panel console">
                <div class="tabstrip shaded">
                    <div class="tab active tab-con"><svg class="tic"><use href="#consoleic"/></svg><span>Console</span><svg class="x"><use href="#close"/></svg></div>
                    <div class="tab tab-se"><svg class="tic"><use href="#pen"/></svg><span>Search</span></div>
                    <div class="tab tab-de"><svg class="tic"><use href="#bug"/></svg><span>Debug</span></div>
                    <div class="strip-tools con-tools">
                        <svg class="ic"><use href="#stop"/></svg><svg class="ic"><use href="#xg"/></svg><svg class="ic"><use href="#xxg"/></svg>
                        <i class="sep s-con"></i>
                        <svg class="ic"><use href="#clr"/></svg><svg class="ic"><use href="#lock"/></svg><svg class="ic"><use href="#wrap"/></svg><svg class="ic on"><use href="#pinc"/></svg><svg class="ic on"><use href="#pincx"/></svg>
                        <i class="sep s-con"></i>
                        <svg class="ic"><use href="#pinw"/></svg><svg class="ic"><use href="#consoleic"/></svg><i class="drop"></i><svg class="ic"><use href="#newy"/></svg><i class="drop"></i>
                        <svg class="mm"><use href="#minv"/></svg><svg class="mm"><use href="#maxv"/></svg>
                    </div>
                </div>
                <div class="con-head">&lt;terminated&gt; Inclonometer [STM32 C/C++ Application] SEGGER J-LINK (Terminated Nov 15, 2023, 6:21:51 PM) [pid: 2726]</div>
                <div class="con-body"></div>
                <div class="hbar hbar-con">
                    <svg class="sa"><use href="#sld"/></svg><svg class="sa end"><use href="#srd"/></svg>
                </div>
            </section>
        </div>

        <div class="rightcol">
            <section class="panel expr">
                <div class="tabstrip">
                    <div class="tab active tab-ex"><svg class="tic"><use href="#glasses"/></svg><span>Expre...</span><svg class="x"><use href="#close"/></svg></div>
                    <div class="strip-tools"><svg class="mm"><use href="#minv"/></svg><svg class="mm"><use href="#maxv"/></svg></div>
                </div>
                <div class="ex-tools">
                    <div class="ex-row first">
                        <svg class="ic"><use href="#typesh"/></svg><svg class="ic on"><use href="#logical"/></svg><svg class="ic"><use href="#collapse"/></svg>
                        <i class="sep s-ex"></i>
                        <svg class="ic"><use href="#plus"/></svg><svg class="ic"><use href="#xg"/></svg><svg class="ic"><use href="#xxg"/></svg>
                        <i class="sep s-ex"></i>
                    </div>
                    <div class="ex-row"><svg class="ic"><use href="#newy"/></svg><svg class="ic"><use href="#newgray"/></svg></div>
                    <div class="ex-row keb"><svg class="ic"><use href="#kebab"/></svg></div>
                </div>
                <div class="ex-table">
                    <div class="ex-name">Name</div>
                    <div class="ex-item"><svg class="tic"><use href="#expr"/></svg><span>"n"</span></div>
                    <div class="ex-item"><svg class="tic"><use href="#expr"/></svg><span>"k"</span></div>
                    <div class="ex-item"><svg class="tic"><use href="#expr"/></svg><span>"eeprom_test"</span></div>
                    <div class="ex-item"><svg class="tic"><use href="#expr"/></svg><span>"testing"</span></div>
                    <div class="ex-item"><svg class="tic"><use href="#plus"/></svg><span class="it">Add new expression</span></div>
                    <div class="ex-item"></div>
                </div>
                <div class="hbar hbar-ex">
                    <svg class="sa"><use href="#sl"/></svg><i class="thumb"></i><svg class="sa end"><use href="#sr"/></svg>
                </div>
                <div class="ex-detail">
                    <div class="ex-white"></div>
                    <div class="vbar vbar-ex"><svg class="sv"><use href="#sud"/></svg><svg class="sv end"><use href="#sdd"/></svg></div>
                </div>
                <div class="hbar hbar-ex2">
                    <svg class="sa"><use href="#sld"/></svg><svg class="sa end"><use href="#srd"/></svg>
                </div>
            </section>

            <section class="panel memory">
                <div class="tabstrip">
                    <div class="tab tab-m"><svg class="tic-db"><use href="#db"/></svg><span>M</span></div>
                    <div class="tab active tab-b"><svg class="tic"><use href="#bin"/></svg><span>B</span><svg class="x"><use href="#close"/></svg></div>
                    <div class="strip-tools"><svg class="mm"><use href="#minv"/></svg><svg class="mm"><use href="#maxv"/></svg></div>
                </div>
                <div class="mem-tools"><svg class="ic"><use href="#pinw"/></svg><svg class="ic"><use href="#kebab"/></svg></div>
                <div class="mem-tabs">
                    <div class="mem-tab">Memory Re...</div>
                    <div class="mem-more"><sup>»</sup><sub>1</sub></div>
                </div>
                <div class="mem-table">
                    <div class="mt-row head"><div>Region</div><div>Start a</div></div>
                    <div class="mt-row"><div></div><div></div></div>
                    <div class="mt-row"><div></div><div></div></div>
                    <div class="mt-row"><div></div><div></div></div>
                    <div class="mt-row"><div></div><div></div></div>
                    <div class="mt-row"><div></div><div></div></div>
                    <div class="mt-row"><div></div><div></div></div>
                    <div class="mt-row"><div></div><div></div></div>
                    <div class="mt-row"><div></div><div></div></div>
                </div>
                <div class="hbar hbar-mem">
                    <svg class="sa"><use href="#sl"/></svg><i class="thumb"></i><svg class="sa end"><use href="#sr"/></svg>
                </div>
            </section>
        </div>

        <aside class="trim">
            <i class="trim-grip"></i>
            <svg class="ic"><use href="#trestore"/></svg>
            <svg class="ic"><use href="#tbreak"/></svg>
            <svg class="ic"><use href="#ttask"/></svg>
            <svg class="ic"><use href="#ttable"/></svg>
            <i class="trim-grip"></i>
            <svg class="ic"><use href="#trestore"/></svg>
            <svg class="ic"><use href="#tstack"/></svg>
            <svg class="ic"><use href="#tcircle"/></svg>
            <svg class="ic"><use href="#ttree"/></svg>
        </aside>
    </main>

    <footer class="status">
        <div class="stat st-w">Writable</div>
        <div class="stat st-s">Smart Insert</div>
        <div class="stat st-p">112 : 47 [38]</div>
        <i class="grip g-st"></i>
        <svg class="ic st-err" viewBox="0 0 16 16"><rect x="1" y="1" width="10" height="4" fill="#9fbf9f" stroke="#5f8f6f"/><rect x="3" y="4" width="10" height="4" fill="#b0ccb0" stroke="#5f8f6f"/><rect x="4" y="7" width="10" height="4" fill="#b0ccb0" stroke="#5f8f6f"/><circle cx="12" cy="12" r="3.500" fill="#d84a4a"/></svg>
    </footer>

    <div class="taskbar">
        <div class="start">
            <svg viewBox="0 0 24 24" class="winlogo"><path d="M0 3.500l10-1.500v9.500H0zM11.500 1.800L24 0v11.500H11.500zM0 12.800h10v9.500L0 20.800zM11.500 12.800H24V24l-12.500-1.800z" fill="#000"/></svg>
        </div>
        <div class="searchbox">
            <svg viewBox="0 0 24 24" class="sb-ic"><circle cx="14.500" cy="9" r="7" fill="none" stroke="#111" stroke-width="1.500"/><path d="M9.500 14L2 22.500" stroke="#111" stroke-width="1.500"/></svg>
            <span>Type here to search</span>
            <svg class="sb-art" viewBox="0 0 107 56">
                <defs>
                    <radialGradient id="gb"><stop offset="0" stop-color="#4a5ed0"/><stop offset=".6" stop-color="#a8a8ee"/><stop offset="1" stop-color="#fff"/></radialGradient>
                    <radialGradient id="gg"><stop offset="0" stop-color="#3aa68a"/><stop offset=".6" stop-color="#a6dcc8"/><stop offset="1" stop-color="#fff"/></radialGradient>
                    <radialGradient id="go"><stop offset="0" stop-color="#f0a070"/><stop offset="1" stop-color="#f0a070" stop-opacity="0"/></radialGradient>
                </defs>
                <circle cx="32" cy="24" r="30" fill="url(#gb)"/>
                <circle cx="62" cy="22" r="26" fill="url(#gg)"/>
                <ellipse cx="52" cy="36" rx="22" ry="12" fill="url(#go)"/>
                <path d="M0 56l16-8 14-13 14 8 14 6 18-8 14-4 17-12v31z" fill="#1c1a44"/>
                <path d="M28 47h79v6H20z" fill="#4a4a70"/>
                <path d="M28 12l3 7M46 10l2 5M50 20l2 2 2-2-2-2zM56 27l2 2 2-2-2-2zM66 9l-3 8M40 26l5-1M14 32l6-3M80 18l-4 2M88 24l3-1M18 17l6 3" stroke="#fff" stroke-width="1.500"/>
            </svg>
        </div>
        <div class="tb tb-none"><svg viewBox="0 0 24 28" class="tv"><path d="M1 2h16M3 7h12v14H3zM1 26h16M22 2v8M22 14v12" fill="none" stroke="#222" stroke-width="1.300"/><rect x="20.500" y="11" width="3" height="2.500" fill="#222"/></svg></div>
        <div class="tb run"><svg viewBox="0 0 32 32"><path d="M0 3a2 2 0 0 1 2-2h9l3 3h16a2 2 0 0 1 2 2v24a2 2 0 0 1-2 2H2a2 2 0 0 1-2-2z" fill="#f9cf4f"/><path d="M0 3a2 2 0 0 1 2-2h9l3 3H0z" fill="#e4a52d"/><path d="M6 32V21h20v11h-5v-6H11v6z" fill="#2a93d8"/></svg></div>
        <div class="tb run"><svg viewBox="0 0 36 36"><path d="M18 18L33.600 9A18 18 0 0 0 2.400 9z" fill="#dd4437"/><path d="M18 18L18 36A18 18 0 0 0 33.600 9z" fill="#f7c22f"/><path d="M18 18L2.400 9A18 18 0 0 0 18 36z" fill="#2f9f54"/><circle cx="18" cy="18" r="8.600" fill="#fff"/><circle cx="18" cy="18" r="6.800" fill="#4a86e8"/></svg></div>
        <div class="tb run"><svg viewBox="0 0 32 36"><rect x="10" y="3" width="22" height="30" fill="#fff" stroke="#1d6f42"/><path d="M14 8h15M14 14h15M14 20h15M14 26h15M21 4v28" stroke="#1d6f42" fill="none"/><path d="M0 4l18-3v34L0 32z" fill="#1d6f42"/><text x="9" y="24" font-family="Liberation Sans" font-size="15" font-weight="700" fill="#fff" text-anchor="middle">X</text></svg></div>
        <div class="tb run cur-app"><svg viewBox="0 0 36 36"><rect width="36" height="36" fill="#3cb1e6"/><text x="18" y="25" font-family="Liberation Sans" font-size="18" font-weight="700" fill="#fff" text-anchor="middle">IDE</text></svg></div>
        <div class="tb run"><svg viewBox="0 0 36 36"><circle cx="18" cy="18" r="15" fill="#109cdf"/><circle cx="11" cy="11" r="9.500" fill="#109cdf"/><circle cx="25" cy="25" r="9.500" fill="#0a8cd0"/><text x="18" y="26" font-family="Liberation Sans" font-size="22" font-weight="700" fill="#fff" text-anchor="middle">S</text></svg></div>
        <div class="tb run"><svg viewBox="0 0 36 36"><path d="M0 14L18 1l18 13v20H0z" fill="#0d5aa8"/><rect x="7" y="7" width="22" height="16" fill="#fff"/><path d="M0 14l18 13 18-13v21H0z" fill="#27a5e6"/><path d="M0 35l18-13 18 13z" fill="#0e83d1"/></svg></div>
        <div class="tb run"><svg viewBox="0 0 36 36"><path d="M15 2l12 12-12 20L3 20z" fill="#fff" stroke="#000" stroke-width="3"/><path d="M13 12l21-1-9 5h-10z" fill="#d24a4a"/><path d="M15 16h12l-5 5h-6z" fill="#2a7ac0"/></svg></div>
        <div class="tb run"><svg viewBox="0 0 36 36"><defs><linearGradient id="eg" x1="0" y1="1" x2="1" y2="0"><stop offset="0" stop-color="#0c59a4"/><stop offset=".6" stop-color="#1b9de2"/><stop offset="1" stop-color="#7fd957"/></linearGradient></defs><circle cx="18" cy="18" r="18" fill="url(#eg)"/><path d="M14 27c-4-6 0-15 8-15 5 0 9 3 9 7 0 2-3 3-6 3h-2c2-3 0-6-3-6-4 0-6 5-4 9 2 4 9 6 15 3-4 5-13 5-17-1z" fill="#dff4fb"/></svg></div>
        <div class="tray">
            <div class="weather">
                <svg viewBox="0 0 36 36"><defs><linearGradient id="sg" x1="0" y1="0" x2="0" y2="1"><stop offset="0" stop-color="#fbc02d"/><stop offset="1" stop-color="#ee7a10"/></linearGradient></defs><circle cx="18" cy="18" r="17" fill="url(#sg)"/><path d="M0 14h24M3 20h22M0 26h22" stroke="#fde4a8" stroke-width="2.500"/></svg>
                <b class="badge">1</b>
            </div>
            <span class="temp">25°C</span>
            <svg class="t-ic t-chev" viewBox="0 0 20 12"><path d="M1 11l9-9 9 9" fill="none" stroke="#111" stroke-width="1.300"/></svg>
            <svg class="t-ic t-meet" viewBox="0 0 18 26"><rect x="1" y="6" width="11" height="14" rx="2" fill="none" stroke="#222" stroke-width="1.200"/><path d="M12 11l5-3v10l-5-3M3 3h7M3 23h7" fill="none" stroke="#222" stroke-width="1.200"/></svg>
            <svg class="t-ic t-bat" viewBox="0 0 24 16"><rect x="1" y="1" width="20" height="14" fill="#fff" stroke="#111" stroke-width="1.300"/><rect x="2.500" y="2.500" width="15" height="11" fill="#000"/><rect x="22" y="5.500" width="2" height="5" fill="#111"/></svg>
            <svg class="t-ic t-wifi" viewBox="0 0 20 20"><path d="M1 18A17 17 0 0 1 18 1M5 18A13 13 0 0 1 18 5" fill="none" stroke="#aaa" stroke-width="1.200"/><path d="M9 18a9 9 0 0 1 9-9M12.500 18A5.500 5.500 0 0 1 18 12.500" fill="none" stroke="#333" stroke-width="1.200"/><circle cx="17" cy="18" r="1.500" fill="#111"/></svg>
            <svg class="t-ic t-vol" viewBox="0 0 22 24"><path d="M1 8h4l6-6v20l-6-6H1z" fill="none" stroke="#222" stroke-width="1.200"/><path d="M14 8a6 6 0 0 1 0 8" fill="none" stroke="#222"/><path d="M17 5a10 10 0 0 1 0 14M20 2a14 14 0 0 1 0 20" fill="none" stroke="#999"/></svg>
            <span class="lang">ENG</span>
            <div class="clock"><div>10:31</div><div>16-11-2023</div></div>
            <svg class="t-ic t-note" viewBox="0 0 26 26"><path d="M1 1h24v19h-7l-5 5-5-5H1z" fill="none" stroke="#111" stroke-width="1.300"/></svg>
        </div>
    </div>
</body>
</html>
```

FILE: styles.css
```css
* {
    box-sizing: border-box;
}
html, body {
    margin: 0;
    padding: 0;
}
body {
    width: 1920px;
    height: 1080px;
    overflow: hidden;
    background: #f0f0f0;
    font-family: "Noto Sans", "Open Sans", sans-serif;
    font-size: 17px;
    letter-spacing: -.12px;
    color: #111;
    display: flex;
    flex-direction: column;
}
.sheet {
    display: none;
}
svg {
    display: block;
    flex: none;
}
i {
    display: block;
    flex: none;
}

/* title + menu */
.titlebar {
    height: 36px;
    background: #fff;
    display: flex;
    align-items: center;
    padding-left: 2px;
}
.app-ic {
    width: 28px;
    height: 28px;
    margin-right: 1px;
}
.title {
    font-size: 17.05px;
    letter-spacing: 0;
    line-height: 22px;
    margin-top: -2px;
    white-space: nowrap;
}
.winctl {
    margin-left: auto;
    display: flex;
    padding-right: 2px;
}
.winctl svg {
    width: 70px;
    height: 32px;
}
.menubar {
    height: 26px;
    background: #fff;
    display: flex;
    align-items: center;
    padding-left: 7px;
    gap: 13.7px;
    white-space: nowrap;
}
.hello {
    display: flex;
    align-items: center;
    margin-left: 2px;
}
.user {
    width: 14px;
    height: 16px;
    margin-right: 5px;
}

/* main toolbar */
.toolbar {
    height: 31px;
    display: flex;
    align-items: center;
    padding-left: 3px;
    border-bottom: 1px solid #dcdcdc;
}
.ic {
    width: 20px;
    height: 20px;
    margin: 0 1.65px;
}
.ic.on {
    background: #cde4f7;
    outline: 1px solid #92c0e8;
    box-shadow: 0 0 0 2px #cde4f7;
}
.drop {
    width: 23.3px;
    height: 7px;
    position: relative;
}
.drop::after {
    content: "";
    position: absolute;
    left: 6px;
    top: 0;
    border-left: 6px solid transparent;
    border-right: 6px solid transparent;
    border-top: 7px solid #111;
}
.drop.dim::after {
    border-top-color: #999;
}
.grip {
    height: 22px;
    border-left: 2px dotted #b0b0b0;
}
.g2 { width: 3px; margin-left: 2px; }
.g3 { width: 2px; }
.g4 { width: 5px; margin-left: 1px; }
.g5 { width: 5px; margin-left: 2px; }
.g6 { width: 6px; margin-left: 2px; }
.g8 { width: 8px; margin-left: 3px; }
.g15 { width: 8px; margin-left: 5px; }
.sep {
    height: 24px;
    border-left: 1px solid #a8a8a8;
}
.s3 { width: 4px; margin-left: 2px; }
.s4 { width: 4px; margin-left: 1px; }
.s5 { width: 9px; margin-left: 2px; }
.s6 { width: 6px; margin-left: 2px; }
.s8 { width: 8px; margin-left: 2px; }
.s10 { width: 6px; margin-left: 3px; }
.tool-right {
    margin-left: auto;
    display: flex;
    align-items: center;
    padding-right: 4px;
}

/* workbench */
.workbench {
    height: 901px;
    display: flex;
    gap: 5px;
}
.panel {
    border: 1px solid #d8d8d8;
    display: flex;
    flex-direction: column;
    overflow: hidden;
}
.explorer {
    width: 374px;
}
.center {
    width: 1348px;
    display: flex;
    flex-direction: column;
    gap: 5px;
}
.rightcol {
    width: 164px;
    display: flex;
    flex-direction: column;
    gap: 5px;
}
.trim {
    width: 24px;
    margin-left: -5px;
    padding-top: 1px;
    display: flex;
    flex-direction: column;
    align-items: center;
}
.trim .ic {
    width: 18px;
    height: 18px;
    margin: 2px 0;
}
.trim-grip {
    width: 16px;
    border-top: 2px dotted #b0b0b0;
    margin: 1px 0 3px;
}
.trim .ic + .trim-grip {
    margin: 4px 0 2px;
}

/* tabs */
.tabstrip {
    height: 33px;
    flex: none;
    display: flex;
    align-items: stretch;
    background: #f0f0f0;
    border-bottom: 1px solid #d8d8d8;
}
.tabstrip.shaded {
    background: linear-gradient(#f0f0f0, #e3e3e3);
    height: 34px;
}
.tab {
    display: flex;
    align-items: center;
    white-space: nowrap;
    flex: none;
}
.tab.active {
    background: #f0f0f0;
    border-right: 1px solid #d8d8d8;
    margin-bottom: -1px;
}
.tab.white {
    background: #fff;
    margin-bottom: -1px;
    border-right: 1px solid #d8d8d8;
}
.tic {
    width: 18px;
    height: 18px;
}
.x {
    width: 14px;
    height: 14px;
}
.strip-tools {
    margin-left: auto;
    display: flex;
    align-items: center;
    padding-right: 5px;
}
.mm {
    width: 14px;
    height: 16px;
    margin: -8px 4px 0;
}
.tab-pe { width: 173px; padding-left: 5px; }
.tab-pe span { margin: 0 5px 0 1px; }
.pe-tools { padding-right: 4px; }
.pe-tools .ic { width: 18px; height: 18px; margin: -6px 2.3px 0; }
.pe-tools .mm:nth-child(5) { margin-left: 7px; }
.tab-main { width: 109px; padding-left: 4px; }
.tab-main span { margin: 0 6px 0 1px; }
.tab-tr { padding-left: 2px; width: 128px; }
.tab-tr span { margin-left: 3px; }
.tab-ee { padding-left: 0; }
.tab-ee span { margin-left: 3px; }
.tab-con { width: 114px; padding-left: 4px; }
.tab-con .tic { margin-right: 2px; }
.tab-con span { margin-right: 7px; }
.tab-se { padding-left: 3px; width: 86px; }
.tab-se span { margin-left: 1px; }
.tab-de { padding-left: 0; }
.tab-de .tic { width: 16px; height: 16px; margin-right: 4px; }
.tab-ex { width: 108px; padding-left: 3px; }
.tab-ex span { margin: 0 7px 0 3px; }
.tab-m { width: 46px; background: #e8e8e8; padding-left: 8px; }
.tic-db { width: 10px; height: 16px; margin-right: 4px; }
.tab-b { width: 60px; padding-left: 5px; }
.tab-b .tic { margin-right: 3px; }
.tab-b span { margin-right: 6px; }

/* project tree */
.tree {
    flex: 1;
    background: #fff;
    overflow: hidden;
}
.row {
    height: 28px;
    padding-bottom: 1px;
    display: flex;
    align-items: center;
    white-space: nowrap;
}
.row .chev {
    width: 12px;
    height: 12px;
    margin: 0 6px;
}
.row .tic {
    width: 18px;
    height: 18px;
    margin: 0 3px 0 3px;
}
.row span {
    margin-left: 1px;
    line-height: 24px;
}
.row em {
    font-style: normal;
    color: #96845c;
}
.l1 { padding-left: 24px; }
.l2 { padding-left: 48px; }
.l3 { padding-left: 72px; }
.picked span {
    background: #e2e2e2;
    margin-left: 0;
    padding: 0 1px;
}

/* scrollbars */
.hbar {
    height: 25px;
    flex: none;
    display: flex;
    align-items: center;
    background: #f0f0f0;
    position: relative;
}
.sa {
    width: 12px;
    height: 16px;
    margin: 0 7px;
}
.sa.end {
    margin-left: auto;
}
.thumb {
    height: 25px;
    background: #c8c8c8;
}
.hbar-pe .thumb { width: 281px; margin-left: 0; }
.hbar-pe .sa { margin: 0 7px 0 6px; }
.hbar-pe .sa.end { margin: 0 8px 0 auto; }
.vbar {
    display: flex;
    flex-direction: column;
    align-items: center;
    background: #f0f0f0;
    flex: none;
}
.sv {
    width: 16px;
    height: 12px;
    margin: 9px 0;
}
.sv.end {
    margin-top: auto;
}
.vthumb {
    width: 100%;
    height: 56px;
    background: #c8c8c8;
    margin-top: 155px;
}

/* editor */
.editor {
    height: 807px;
}
.edit-body {
    flex: 1;
    display: flex;
    overflow: hidden;
    min-height: 0;
    background: #fff;
}
.changebar {
    width: 11px;
    flex: none;
    background: #f8f8f8 linear-gradient(#6bb0d4, #6bb0d4) no-repeat 0 114px / 11px 391px;
}
.numbers {
    width: 35px;
    flex: none;
    margin-top: -1px;
    font-family: "DejaVu Sans Mono", monospace;
    font-size: 18px;
    letter-spacing: 0;
    line-height: 23px;
    color: #787878;
    text-align: right;
    background: #fff;
}
.numbers div {
    height: 23px;
    padding-right: 2px;
    position: relative;
}
.numbers .chg {
    background: #e6dce8;
}
.numbers .ul {
    border-bottom: 2px solid #111;
}
.numbers .fold::after {
    content: "";
    position: absolute;
    right: -10px;
    top: 7px;
    width: 8px;
    height: 8px;
    border: 1px solid #aaa;
    border-radius: 50%;
    background: linear-gradient(#888, #888) no-repeat center / 4px 1px;
}
.code {
    margin: -1px 0 0;
    width: 1262px;
    flex: none;
    padding-left: 11px;
    font-family: "DejaVu Sans Mono", monospace;
    font-size: 18px;
    letter-spacing: .16px;
    line-height: 23px;
    color: #111;
}
.code div {
    height: 23px;
}
.code b {
    font-weight: 700;
}
.kw { color: #7f0055; }
.fn { color: #642880; }
.ty { color: #005f6f; }
.str { color: #2a00ff; }
.cm { color: #3f7f5f; }
.squig {
    text-decoration: underline wavy #d8805a 1px;
    text-underline-offset: 2px;
}
.code .cur {
    background: #e8f2fe;
    margin-left: -1px;
    padding-left: 1px;
}
.sel {
    background: #0078d7;
    color: #fff;
    display: inline-block;
    height: 23px;
    vertical-align: top;
}
.caret {
    display: inline-block;
    width: 2px;
    height: 23px;
    background: #111;
    vertical-align: top;
}
.vbar-ed {
    width: 25px;
}
.vbar-ed .sv.end {
    margin-bottom: 7px;
}
.overview {
    width: 13px;
    flex: none;
    background: #f8f8f8;
    position: relative;
}
.ov-mark {
    position: absolute;
    left: 2px;
    width: 9px;
    height: 5px;
    background: #a0a0a0;
    border: 1px solid #444;
}
.m1 { top: 188px; }
.pink { top: 212px; background: #f0d8f0; border-color: #d8a8d8; }
.m3 { top: 221px; }
.hbar-ed {
    height: 26px;
    padding-left: 54px;
    background: linear-gradient(90deg, #f8f8f8 54px, #f0f0f0 54px);
    padding-right: 47px;
}
.hbar-ed .sa { margin: 0 0 0 7px; }
.hbar-ed .sa.end { margin: 0 0 0 auto; }

/* console */
.console {
    height: 90px;
}
.tab-se .tic, .tab-de .tic {
    flex: none;
}
.con-tools .ic {
    margin: 0 1.6px;
}
.s-con {
    width: 6px;
    margin-left: 2px;
}
.con-tools .mm {
    margin: -8px 4px 0;
}
.con-head {
    height: 25px;
    flex: none;
    padding-left: 1px;
    font-size: 17.15px;
    letter-spacing: 0;
    line-height: 24px;
    white-space: nowrap;
    border-bottom: 1px solid #999;
}
.con-body {
    height: 5px;
    flex: none;
    background: #fff;
}
.hbar-con {
    height: 24px;
    padding-right: 35px;
}
.hbar-con .sa { margin: 0 0 0 8px; }
.hbar-con .sa.end { margin: 0 0 0 auto; }

/* expressions */
.expr {
    height: 448px;
}
.ex-tools {
    height: 74px;
    flex: none;
    padding: 1px 3px 0 0;
}
.ex-row {
    display: flex;
    align-items: center;
    height: 21px;
}
.ex-row .ic {
    margin: 0 1.65px;
    width: 20px;
    height: 20px;
}
.ex-row .ic:first-child {
    margin-left: 0;
}
.ex-row.first {
    height: 26px;
    border-bottom: 1px solid #a8a8a8;
    margin-bottom: 2px;
}
.ex-row.first .ic {
    margin: 0 1.7px;
}
.ex-row.first .ic:first-child {
    margin-left: 0;
}
.ex-row.keb {
    margin-top: 2px;
}
.s-ex {
    width: 5px;
    margin-left: 2px;
    height: 22px;
}
.ex-table {
    background: #fff;
    flex: none;
    overflow: hidden;
}
.ex-name {
    height: 31px;
    line-height: 33px;
    padding-left: 6px;
}
.ex-item {
    height: 28px;
    display: flex;
    align-items: center;
    white-space: nowrap;
    border-bottom: 1px solid #d8d8d8;
    padding-left: 25px;
}
.ex-item span {
    margin-left: 5px;
}
.it {
    font-style: italic;
    font-size: 17.6px;
}
.hbar-ex {
    height: 36px;
    align-items: flex-start;
    padding-top: 6px;
}
.hbar-ex .sa { margin: 4px 0 0 7px; }
.hbar-ex .thumb { width: 60px; height: 24px; margin-left: 7px; }
.hbar-ex .sa.end { margin: 4px 7px 0 auto; }
.ex-detail {
    height: 80px;
    flex: none;
    display: flex;
}
.ex-white {
    width: 139px;
    background: #fff;
}
.vbar-ex {
    width: 23px;
    padding: 0;
}
.vbar-ex .sv {
    margin: 9px 0;
}
.vbar-ex .sv.end {
    margin-top: auto;
}
.hbar-ex2 {
    flex: 1;
}
.hbar-ex2 .sa { margin: 0 0 0 7px; }
.hbar-ex2 .sa.end { margin: 0 32px 0 auto; }

/* memory view */
.memory {
    height: 448px;
}
.tabstrip .tab-m {
    margin-bottom: 0;
}
.mem-tools {
    height: 61px;
    flex: none;
    display: flex;
    justify-content: flex-end;
    padding: 2px 1px 0 0;
}
.mem-tools .ic {
    margin: 0 1px;
}
.mem-tabs {
    height: 29px;
    flex: none;
    display: flex;
    margin: 0 4px;
    border-bottom: 1px solid #a8a8a8;
}
.mem-tab {
    width: 116px;
    background: #fff;
    border-top: 2px solid #666;
    border-right: 1px solid #a8a8a8;
    margin-bottom: -1px;
    line-height: 26px;
    padding-left: 4px;
    white-space: nowrap;
    overflow: hidden;
}
.mem-more {
    padding-left: 14px;
    font-size: 11px;
    line-height: 12px;
    display: flex;
}
.mem-more sub {
    margin: 12px 0 0 -3px;
    vertical-align: baseline;
    font-size: 11px;
}
.mem-more sup {
    margin-top: 3px;
    font-size: 14px;
    vertical-align: baseline;
}
.mem-table {
    margin: 2px 6px 0;
    background: #fff;
    height: 291px;
    overflow: hidden;
    flex: none;
}
.mt-row {
    height: 29px;
    display: flex;
    border-bottom: 1px solid #ececec;
}
.mt-row.head {
    height: 31px;
    border-bottom: none;
}
.mt-row div {
    width: 100px;
    flex: none;
    border-right: 1px solid #ececec;
    padding-left: 6px;
    line-height: 31px;
    white-space: nowrap;
}
.mt-row div:last-child {
    width: 50px;
    border-right: none;
    overflow: hidden;
}
.hbar-mem {
    height: 24px;
    padding: 0 14px;
}
.hbar-mem .sa { margin: 0; }
.hbar-mem .thumb { width: 26px; margin-left: 6px; height: 24px; }
.hbar-mem .sa.end { margin: 0 0 0 auto; }

/* status line */
.status {
    height: 26px;
    display: flex;
    padding-left: 871px;
    align-items: flex-start;
}
.stat {
    height: 22px;
    border-left: 1px solid #a8a8a8;
    padding-left: 8px;
    line-height: 26px;
    white-space: nowrap;
    flex: none;
}
.st-w { width: 214px; }
.st-s { width: 204px; }
.st-p { width: 201px; }
.g-st { height: 16px; margin-top: 5px; width: 2px; }
.st-err { width: 18px; height: 18px; margin: 2px 0 0 400px; }

/* taskbar */
.taskbar {
    height: 60px;
    display: flex;
    align-items: stretch;
    flex: none;
}
.start {
    width: 72px;
    display: flex;
    align-items: center;
    justify-content: center;
}
.winlogo {
    width: 24px;
    height: 24px;
}
.searchbox {
    width: 431px;
    border: 2px solid #c8c8c8;
    background: #fff;
    display: flex;
    align-items: center;
    position: relative;
    overflow: hidden;
    font-size: 21.6px;
    letter-spacing: 0;
    color: #222;
}
.sb-ic {
    width: 24px;
    height: 24px;
    margin: 0 19px 0 16px;
}
.sb-art {
    position: absolute;
    right: 0;
    top: 0;
    width: 107px;
    height: 56px;
}
.tb {
    width: 75.4px;
    display: flex;
    align-items: center;
    justify-content: center;
    position: relative;
    padding-bottom: 1px;
}
.tb svg {
    width: 36px;
    height: 36px;
}
.tb.run::after {
    content: "";
    position: absolute;
    left: 7px;
    right: 7px;
    bottom: 0;
    height: 3px;
    background: #4a4a4a;
}
.cur-app {
    background: #fff;
}
.cur-app::after {
    left: 0 !important;
    right: 0 !important;
}
.tv {
    width: 24px !important;
    height: 28px !important;
}
.tray {
    margin-left: auto;
    display: flex;
    align-items: center;
    position: relative;
    width: 560px;
}
.weather {
    position: relative;
    margin-left: 10px;
    width: 36px;
    height: 36px;
}
.weather svg {
    width: 32px;
    height: 36px;
    margin-left: 2px;
}
.badge {
    position: absolute;
    right: -4px;
    top: -3px;
    width: 18px;
    height: 18px;
    border-radius: 50%;
    background: #c62828;
    color: #fff;
    font-size: 13px;
    line-height: 18px;
    text-align: center;
    font-weight: 400;
}
.temp {
    font-size: 20.5px;
    letter-spacing: 0;
    margin-left: 14px;
    width: 80px;
}
.t-ic {
    flex: none;
}
.t-chev { width: 20px; height: 12px; margin-left: 0; }
.t-meet { width: 18px; height: 26px; margin-left: 18px; }
.t-bat { width: 24px; height: 16px; margin-left: 14px; }
.t-wifi { width: 20px; height: 20px; margin-left: 18px; }
.t-vol { width: 22px; height: 24px; margin-left: 13px; }
.lang {
    margin-left: 17px;
    font-size: 17px;
    letter-spacing: 0;
    width: 46px;
}
.clock {
    width: 100px;
    margin-left: -1px;
    text-align: center;
    font-size: 17px;
    letter-spacing: 0;
    line-height: 27px;
    white-space: nowrap;
}
.t-note { width: 26px; height: 26px; margin-left: 27px; }
```
